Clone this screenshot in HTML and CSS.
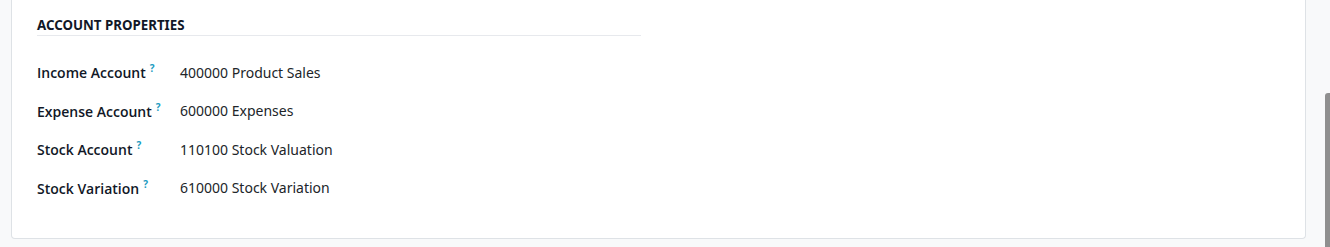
FILE: index.html
```html
<!DOCTYPE html>
<html lang="en">
<head>
    <meta charset="UTF-8">
    <title>Account Properties</title>
    <link rel="stylesheet" href="styles.css">
</head>
<body>
    <div class="sheet">
        <div class="group">
            <div class="group-title">Account Properties</div>
            <div class="field">
                <div class="field-label">Income Account<sup class="tip">?</sup></div>
                <div class="field-value">400000 Product Sales</div>
            </div>
            <div class="field">
                <div class="field-label">Expense Account<sup class="tip">?</sup></div>
                <div class="field-value">600000 Expenses</div>
            </div>
            <div class="field">
                <div class="field-label">Stock Account<sup class="tip">?</sup></div>
                <div class="field-value">110100 Stock Valuation</div>
            </div>
            <div class="field">
                <div class="field-label">Stock Variation<sup class="tip">?</sup></div>
                <div class="field-value">610000 Stock Variation</div>
            </div>
        </div>
    </div>
    <div class="scrollbar"></div>
</body>
</html>
```

FILE: styles.css
```css
body {
    margin: 0;
    padding: 0 24px 0 11px;
    background-color: #f8f9fa;
    font-family: "Noto Sans", "Open Sans", sans-serif;
    font-size: 14px;
    color: #212529;
}

.sheet {
    background-color: #fff;
    border: 1px solid #dee2e6;
    border-top: none;
    border-radius: 0 0 4px 4px;
    padding: 16px 25px 38px;
    height: 184px;
}

.group {
    width: 604px;
}

.group-title {
    font-size: 13.3px;
    font-weight: 700;
    text-transform: uppercase;
    color: #111827;
    padding-bottom: 1px;
    border-bottom: 1px solid #e7e9ed;
    margin-bottom: 25px;
}

.field {
    display: flex;
    align-items: baseline;
    height: 38.5px;
}

.field-label {
    width: 143px;
    flex-shrink: 0;
    font-family: "Open Sans", "Noto Sans", sans-serif;
    font-weight: 600;
    color: #111827;
}

.tip {
    color: #1a9bbf;
    font-size: 10px;
    font-weight: 700;
    margin-left: 4px;
}

.field-value {
    color: #212529;
}

.scrollbar {
    position: fixed;
    right: 0;
    top: 93px;
    bottom: 0;
    width: 5px;
    background-color: #8f8f8f;
    border-radius: 3px 0 0 0;
}
```
